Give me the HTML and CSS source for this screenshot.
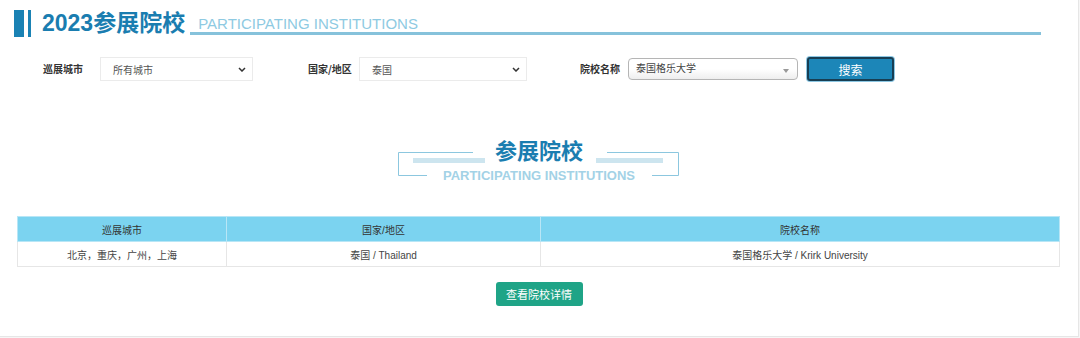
FILE: index.html
```html
<!DOCTYPE html>
<html lang="zh-CN">
<head>
    <meta charset="UTF-8">
    <title>2023参展院校</title>
    <link rel="stylesheet" href="styles.css">
</head>
<body>
<div class="page">
    <div class="head">
        <span class="mark"></span><span class="mark-thin"></span>
        <h1 class="title">2023参展院校</h1>
        <div class="sub">PARTICIPATING INSTITUTIONS</div>
    </div>

    <div class="filtro">
        <label class="lb lb1">巡展城市</label>
        <div class="sel sel1">所有城市
            <svg class="chev" width="8" height="5" viewBox="0 0 8 5"><path d="M1 1 L4 4 L7 1" fill="none" stroke="#333" stroke-width="1.5"/></svg>
        </div>
        <label class="lb lb2">国家/地区</label>
        <div class="sel sel2">泰国
            <svg class="chev" width="8" height="5" viewBox="0 0 8 5"><path d="M1 1 L4 4 L7 1" fill="none" stroke="#333" stroke-width="1.5"/></svg>
        </div>
        <label class="lb lb3">院校名称</label>
        <div class="sel2box">泰国格乐大学<span class="tri"></span></div>
        <button class="buscar">搜索</button>
    </div>

    <div class="sec-title">
        <svg class="deco" width="282" height="25" viewBox="0 0 282 25">
            <path d="M75 0.5 H0.5 V23.5 H29" fill="none" stroke="#8cc7df" stroke-width="1"/>
            <path d="M209 0.5 H280.5 V23.5 H254" fill="none" stroke="#8cc7df" stroke-width="1"/>
            <rect x="15" y="6" width="72" height="5" fill="#cde5ef"/>
            <rect x="198" y="6" width="67" height="5" fill="#cde5ef"/>
        </svg>
        <h2>参展院校</h2>
        <p>PARTICIPATING INSTITUTIONS</p>
    </div>

    <table class="lista">
        <thead><tr><th class="c1">巡展城市</th><th class="c2">国家/地区</th><th>院校名称</th></tr></thead>
        <tbody>
            <tr><td>北京，重庆，广州，上海</td><td>泰国 / Thailand</td><td>泰国格乐大学 / Krirk University</td></tr>
        </tbody>
    </table>

    <div class="acao"><button class="ver">查看院校详情</button></div>
</div>
</body>
</html>
```

FILE: styles.css
```css
body { margin: 0; background: #f6f6f6; font-family: "Liberation Sans", "Noto Sans CJK SC", sans-serif; }
.page { width: 1078px; height: 336px; background: #fff; border-right: 1px solid #e6e6e6; border-bottom: 1px solid #e6e6e6; }

.head { display: flex; align-items: flex-end; padding: 10px 37px 0 14px; }
.mark { width: 10px; height: 27px; background: #1a82b4; }
.mark-thin { width: 3px; height: 27px; background: #1a82b4; margin-left: 4px; }
.title { margin: 0 0 0 11px; font: bold 23px/27px "Liberation Sans", "Noto Sans CJK SC", sans-serif; color: #1a7db0; white-space: nowrap; }
.sub { flex: 1; margin: 0 0 2px 5px; padding-left: 8px; font-size: 15px; line-height: 16px; color: #8ecae2; border-bottom: 3px solid #86c2db; white-space: nowrap; }

.filtro { display: flex; align-items: center; height: 24px; margin-top: 20px; padding-left: 43px; font-size: 10px; white-space: nowrap; }
.lb { font-weight: bold; color: #333; font-family: "Noto Sans CJK SC", sans-serif; margin-top: -2px; }
.lb1 { width: 57px; }
.lb2 { width: 51px; margin-left: 55px; }
.lb3 { width: 48px; margin-left: 53px; }
.sel { position: relative; box-sizing: border-box; height: 24px; line-height: 24px; padding-left: 12px; border: 1px solid #ebebeb; color: #555; font-family: "Noto Sans CJK SC", sans-serif; font-size: 10px; }
.sel1 { width: 153px; }
.sel2 { width: 168px; }
.chev { position: absolute; right: 6px; top: 9px; }
.sel2box { position: relative; box-sizing: border-box; width: 170px; height: 22px; line-height: 18px; padding-left: 7px; border: 1px solid #b5b5b5; border-radius: 4px; background: linear-gradient(#fff 50%, #eee); color: #444; font-family: "Noto Sans CJK SC", sans-serif; }
.tri { position: absolute; right: 8px; top: 10px; border-left: 3px solid transparent; border-right: 3px solid transparent; border-top: 4px solid #999; }
.buscar { box-sizing: border-box; width: 87px; height: 24px; margin-left: 9px; background: #1c86b8; color: #fff; border: 2px solid #183e53; border-radius: 3px; box-shadow: 0 0 0 1px #8cc7e3; font: 12px "Noto Sans CJK SC", sans-serif; }

.sec-title { position: relative; width: 282px; margin: 54px auto 0; text-align: center; }
.deco { position: absolute; left: 0; top: 17px; }
.sec-title h2 { margin: 0; font: bold 22px/28px "Noto Sans CJK SC", sans-serif; color: #1a7db0; }
.sec-title p { margin: 5px 0 0; font: bold 13px/16px "Liberation Sans", sans-serif; color: #a3d2e6; }

.lista { width: 1043px; table-layout: fixed; margin: 32px 0 0 17px; border-collapse: collapse; font-size: 10px; font-family: "Liberation Sans", "Noto Sans CJK SC", sans-serif; }
.lista th, .lista td { border: 1px solid #e6e6e6; text-align: center; padding: 0; }
.lista th { height: 24px; background: #7bd3f0; color: #333; font-weight: normal; border-color: #b8e6f6; }
.lista td { height: 24px; color: #444; }
.c1 { width: 208px; }
.c2 { width: 313px; }

.acao { text-align: center; margin-top: 15px; }
.ver { width: 87px; height: 24px; background: #1fa487; color: #fff; border: none; border-radius: 3px; font: 11px "Noto Sans CJK SC", sans-serif; }
```
